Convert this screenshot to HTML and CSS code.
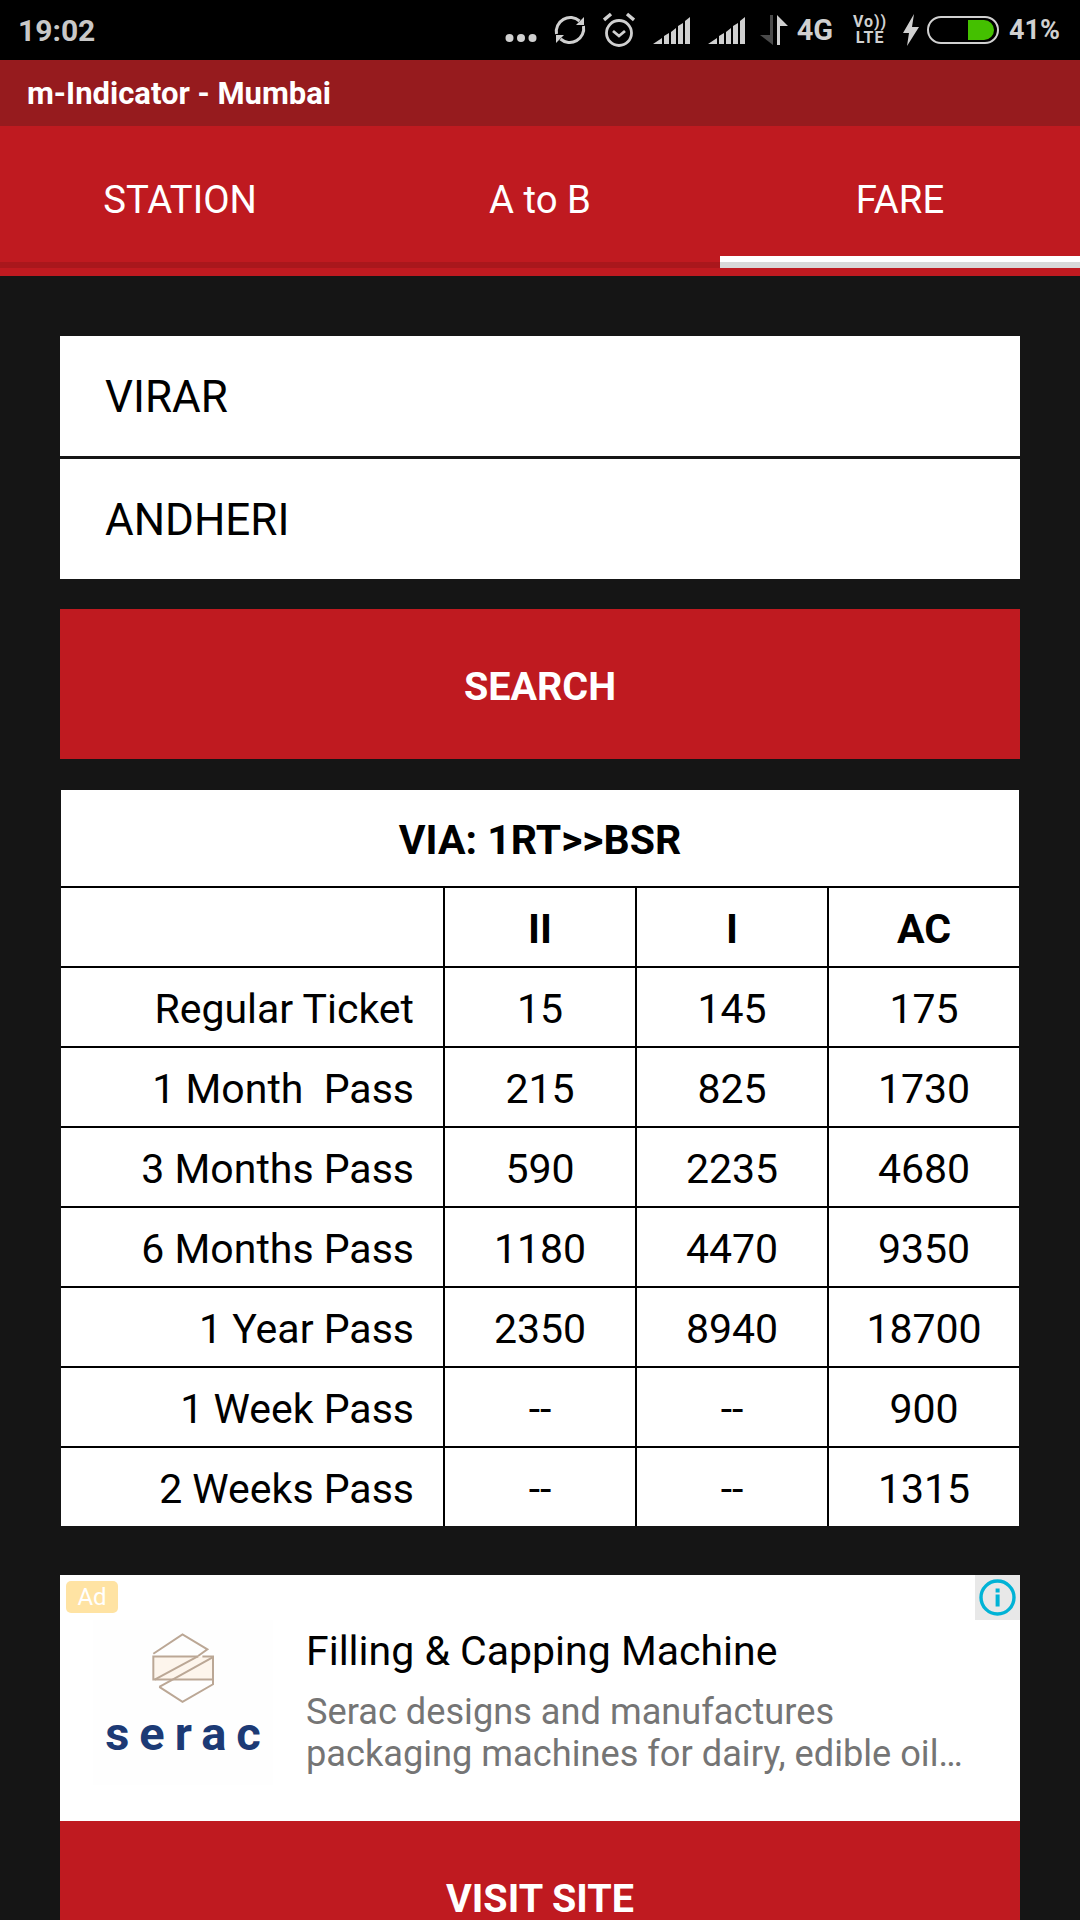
FILE: index.html
```html
<!DOCTYPE html>
<html lang="en">
<head>
  <meta charset="UTF-8">
  <meta name="viewport" content="width=device-width, initial-scale=1.0">
  <title>m-Indicator - Mumbai</title>
  <link rel="stylesheet" href="styles.css">
</head>
<body>
  <div class="status-bar">
    <span class="clock">19:02</span>
    <div class="status-icons">
      <svg class="ic-dots" width="32" height="10" viewBox="0 0 32 10"><circle cx="4.5" cy="5" r="4" /><circle cx="16" cy="5" r="4" /><circle cx="27.5" cy="5" r="4" /></svg>
      <svg class="ic-sync" width="32" height="34" viewBox="0 0 32 34" fill="none" stroke="#d0d0d0" stroke-width="3"><path d="M2.5 21a14 14 0 0 1 23-13" /><path d="M29.500 13a14 14 0 0 1-23 13" /><path d="M30 4v8h-8z" fill="#d0d0d0" stroke="none" /><path d="M2 30v-8h8z" fill="#d0d0d0" stroke="none" /></svg>
      <svg class="ic-alarm" width="32" height="36" viewBox="0 0 32 36" fill="none" stroke="#d0d0d0" stroke-width="2.800"><circle cx="16" cy="21" r="12.500" /><path d="M10 19l6 5 6-5" /><path d="M1 8l7-6M31 8l-7-6" stroke-width="3.400" /></svg>
      <svg class="ic-signal" width="37" height="27" viewBox="0 0 37 27"><path d="M0 27l9-6v6zM11 19l5-3v11h-5zM18 15l5-4v16h-5zM25 9l5-3v21h-5zM32 4l5-4v27h-5z" /></svg>
      <svg class="ic-signal ic-signal-last" width="37" height="27" viewBox="0 0 37 27"><path d="M0 27l9-6v6zM11 19l5-3v11h-5zM18 15l5-4v16h-5zM25 9l5-3v21h-5zM32 4l5-4v27h-5z" /></svg>
      <svg class="ic-arrows" width="28" height="30" viewBox="0 0 28 30"><path d="M10 0h3v30L0 20h10z" fill="#4a4a4a" /><path d="M17 0l11 11h-8v19h-3z" fill="#d0d0d0" /></svg>
      <span class="net">4G</span>
      <div class="volte"><span>Vo))</span><span>LTE</span></div>
      <svg class="ic-bolt" width="16" height="32" viewBox="0 0 16 32"><path d="M11 0L0 19h6L4 32 16 13H9z" /></svg>
      <div class="battery"><div class="battery-fill"></div></div>
      <span class="percent">41%</span>
    </div>
  </div>

  <div class="app-bar">m-Indicator - Mumbai</div>

  <div class="tabs">
    <div class="tab">STATION</div>
    <div class="tab">A to B</div>
    <div class="tab tab-active">FARE</div>
  </div>

  <div class="content">
    <div class="fields">
      <div class="field">VIRAR</div>
      <div class="field">ANDHERI</div>
    </div>
    <div class="btn">SEARCH</div>

    <div class="fare-table">
      <div class="cell cell-via">VIA: 1RT&gt;&gt;BSR</div>

      <div class="cell"></div>
      <div class="cell cell-head">II</div>
      <div class="cell cell-head">I</div>
      <div class="cell cell-head">AC</div>

      <div class="cell cell-name">Regular Ticket</div>
      <div class="cell">15</div>
      <div class="cell">145</div>
      <div class="cell">175</div>

      <div class="cell cell-name">1 Month&nbsp; Pass</div>
      <div class="cell">215</div>
      <div class="cell">825</div>
      <div class="cell">1730</div>

      <div class="cell cell-name">3 Months Pass</div>
      <div class="cell">590</div>
      <div class="cell">2235</div>
      <div class="cell">4680</div>

      <div class="cell cell-name">6 Months Pass</div>
      <div class="cell">1180</div>
      <div class="cell">4470</div>
      <div class="cell">9350</div>

      <div class="cell cell-name">1 Year Pass</div>
      <div class="cell">2350</div>
      <div class="cell">8940</div>
      <div class="cell">18700</div>

      <div class="cell cell-name">1 Week Pass</div>
      <div class="cell">--</div>
      <div class="cell">--</div>
      <div class="cell">900</div>

      <div class="cell cell-name">2 Weeks Pass</div>
      <div class="cell">--</div>
      <div class="cell">--</div>
      <div class="cell">1315</div>
    </div>

    <div class="ad">
      <span class="ad-badge">Ad</span>
      <div class="ad-info">
        <svg width="37" height="37" viewBox="0 0 37 37" fill="none"><circle cx="18.500" cy="18.500" r="16.500" stroke="#00b3d6" stroke-width="3.400" /><rect x="16.600" y="15.500" width="4" height="12" fill="#00b3d6" /><rect x="16.600" y="9.500" width="4" height="4" fill="#00b3d6" /></svg>
      </div>
      <div class="ad-logo">
        <svg width="63" height="70" viewBox="0 0 190 210" fill="none" stroke="#bba795" stroke-width="6"><path d="M4 70h182v70H16L4 140z" fill="#fdf5ec" stroke="none" /><path d="M4 62L92 4l75 45-28 20" /><path d="M140 70H4v70h180V70h-32" /><path d="M8 140L138 70M62 140L184 72" /><path d="M22 162l70 45 92-53v-14" /><path d="M22 162l40-22" /></svg>
        <span class="logo-name">serac</span>
      </div>
      <div class="ad-text">
        <div class="ad-title">Filling &amp; Capping Machine</div>
        <div class="ad-desc">Serac designs and manufactures<br>packaging machines for dairy, edible oil…</div>
      </div>
    </div>
    <div class="btn btn-visit">VISIT SITE</div>
  </div>
</body>
</html>
```

FILE: styles.css
```css
html, body{
  margin: 0;
  height: 1920px;
  overflow: hidden;
}
body{
  font-family: Roboto, "Liberation Sans", sans-serif;
  background-color: #151515;
  color: #000;
}
.status-bar{
  height: 60px;
  background-color: #000;
  display: flex;
  align-items: center;
  justify-content: space-between;
  color: #d0d0d0;
  font-weight: 500;
  padding: 0 20px 0 18px;
}
.clock{
  font-size: 30px;
  font-weight: 700;
  color: #c8c8c8;
}
.status-icons{
  display: flex;
  align-items: center;
}
.status-icons svg{
  display: block;
}
.ic-dots,
.ic-signal,
.ic-bolt{
  fill: #d0d0d0;
}
.ic-dots{
  margin-top: 15px;
  margin-right: 17px;
}
.ic-sync{
  margin-right: 17px;
}
.ic-alarm{
  margin-right: 18px;
}
.ic-signal{
  margin-right: 18px;
}
.ic-signal-last{
  margin-right: 15px;
}
.ic-arrows{
  margin-right: 9px;
}
.net{
  font-size: 29px;
  font-weight: 700;
  margin-right: 22px;
}
.volte{
  display: flex;
  flex-direction: column;
  font-size: 16px;
  font-weight: 700;
  line-height: 16px;
  letter-spacing: 1px;
  width: 30px;
  align-items: center;
  margin-right: 18px;
}
.ic-bolt{
  margin-right: 8px;
}
.battery{
  width: 72px;
  height: 28px;
  box-sizing: border-box;
  border: 2px solid #d0d0d0;
  border-radius: 14px;
  padding: 2px 3px;
  display: flex;
  justify-content: flex-end;
  margin-right: 10px;
}
.battery-fill{
  width: 26px;
  background-color: #44c000;
  border-radius: 0 10px 10px 0;
}
.percent{
  font-size: 27px;
  font-weight: 700;
}
.app-bar{
  height: 66px;
  background-color: #961b1e;
  color: #fff;
  font-size: 31px;
  font-weight: 700;
  line-height: 68px;
  padding-left: 27px;
}
.tabs{
  height: 150px;
  background-color: #bf1a20;
  display: grid;
  grid-template-columns: 360px 360px 360px;
  color: #fff;
  font-size: 38.300px;
}
.tab{
  height: 142px;
  box-sizing: border-box;
  line-height: 147px;
  text-align: center;
  border-bottom: 6px solid #a9171c;
}
.tab-active{
  border-bottom: 0;
  position: relative;
}
.tab-active::after{
  content: "";
  position: absolute;
  left: 0;
  right: 0;
  top: 130px;
  height: 12px;
  background: linear-gradient(#fff 50%, #d8d8d8 50%);
}
.content{
  padding: 60px 60px 0;
}
.fields{
  display: flex;
  flex-direction: column;
  gap: 3px;
}
.field{
  height: 120px;
  background-color: #fff;
  font-size: 44px;
  line-height: 122px;
  padding-left: 45px;
}
.btn{
  margin-top: 30px;
  height: 150px;
  background-color: #bf1a20;
  color: #fff;
  font-size: 39.500px;
  font-weight: 700;
  line-height: 155px;
  text-align: center;
}
.fare-table{
  margin-top: 31px;
  margin-left: 1px;
  margin-right: 1px;
  display: grid;
  grid-template-columns: 382px 190px 190px 190px;
  grid-template-rows: 96px;
  grid-auto-rows: 78px;
  gap: 2px;
  background-color: #000;
  font-size: 41px;
}
.cell{
  background-color: #fff;
  display: flex;
  align-items: center;
  justify-content: center;
  padding-top: 3px;
}
.cell-via{
  grid-column: 1 / 5;
  font-weight: 700;
}
.cell-head{
  font-weight: 700;
}
.cell-name{
  justify-content: flex-end;
  padding-right: 29px;
}
.ad{
  position: relative;
  margin-top: 49px;
  height: 246px;
  background-color: #fff;
  display: flex;
}
.ad-badge{
  position: absolute;
  left: 6px;
  top: 6px;
  width: 52px;
  height: 32px;
  border-radius: 5px;
  background-color: #ffe3a3;
  color: #fff;
  font-size: 24px;
  line-height: 32px;
  text-align: center;
}
.ad-info{
  position: absolute;
  right: 0;
  top: 0;
  width: 45px;
  height: 45px;
  background-color: #e8e8e8;
  display: flex;
  align-items: center;
  justify-content: center;
}
.ad-logo{
  width: 180px;
  height: 165px;
  margin: 45px 33px 0;
  background-color: #fefefe;
  display: flex;
  flex-direction: column;
  align-items: center;
  padding-top: 13px;
  box-sizing: border-box;
}
.logo-name{
  color: #1c3a75;
  font-size: 47px;
  font-weight: 700;
  letter-spacing: 10px;
  line-height: 40px;
  margin-top: 11px;
  margin-right: -10px;
}
.ad-text{
  padding-top: 51px;
}
.ad-title{
  font-size: 41px;
  line-height: 50px;
}
.ad-desc{
  margin-top: 15px;
  font-size: 36.200px;
  line-height: 42px;
  color: #757575;
  white-space: nowrap;
}
.btn-visit{
  margin-top: 0;
}
```
